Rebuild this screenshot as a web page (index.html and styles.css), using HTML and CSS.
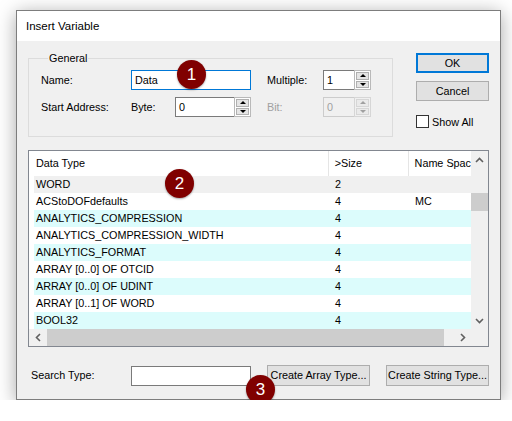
FILE: index.html
```html
<!DOCTYPE html>
<html lang="en">
<head>
    <meta charset="UTF-8">
    <title>Insert Variable</title>
    <link rel="stylesheet" href="styles.css">
</head>
<body>
    <div class="dialog">
        <div class="titlebar">Insert Variable</div>
        <div class="body">
            <div class="top">
                <fieldset class="group">
                    <legend>General</legend>
                    <div class="fields">
                        <span class="lbl">Name:</span>
                        <div class="edit focus name-edit">Data</div>
                        <span class="lbl col5">Multiple:</span>
                        <div class="spin">
                            <span class="spin-val">1</span>
                            <span class="spin-btns">
                                <span><i class="tri up"></i></span>
                                <span><i class="tri down"></i></span>
                            </span>
                        </div>
                        <span class="lbl">Start Address:</span>
                        <span class="lbl">Byte:</span>
                        <div class="spin">
                            <span class="spin-val">0</span>
                            <span class="spin-btns">
                                <span><i class="tri up"></i></span>
                                <span><i class="tri down"></i></span>
                            </span>
                        </div>
                        <span class="lbl col5 disabled">Bit:</span>
                        <div class="spin disabled">
                            <span class="spin-val">0</span>
                            <span class="spin-btns">
                                <span><i class="tri up"></i></span>
                                <span><i class="tri down"></i></span>
                            </span>
                        </div>
                    </div>
                </fieldset>
                <div class="side">
                    <div class="btn default">OK</div>
                    <div class="btn">Cancel</div>
                    <label class="check"><span class="box"></span>Show All</label>
                </div>
            </div>

            <div class="list">
                <div class="list-main">
                    <div class="hdr">
                        <span class="c1">Data Type</span>
                        <span class="c2">&gt;Size</span>
                        <span class="c3">Name Spac</span>
                    </div>
                    <div class="row sel"><span class="c1">WORD</span><span class="c2">2</span><span class="c3"></span></div>
                    <div class="row"><span class="c1">ACStoDOFdefaults</span><span class="c2">4</span><span class="c3">MC</span></div>
                    <div class="row alt"><span class="c1">ANALYTICS_COMPRESSION</span><span class="c2">4</span><span class="c3"></span></div>
                    <div class="row"><span class="c1">ANALYTICS_COMPRESSION_WIDTH</span><span class="c2">4</span><span class="c3"></span></div>
                    <div class="row alt"><span class="c1">ANALYTICS_FORMAT</span><span class="c2">4</span><span class="c3"></span></div>
                    <div class="row"><span class="c1">ARRAY [0..0] OF OTCID</span><span class="c2">4</span><span class="c3"></span></div>
                    <div class="row alt"><span class="c1">ARRAY [0..0] OF UDINT</span><span class="c2">4</span><span class="c3"></span></div>
                    <div class="row"><span class="c1">ARRAY [0..1] OF WORD</span><span class="c2">4</span><span class="c3"></span></div>
                    <div class="row alt"><span class="c1">BOOL32</span><span class="c2">4</span><span class="c3"></span></div>
                </div>
                <div class="vscroll">
                    <span class="arrow"><svg width="9" height="6" viewBox="0 0 9 6"><path d="M1 5 L4.5 1.5 L8 5" fill="none" stroke="#606060" stroke-width="1.6"/></svg></span>
                    <span class="vgap"></span>
                    <span class="vthumb"></span>
                    <span class="fill"></span>
                    <span class="arrow"><svg width="9" height="6" viewBox="0 0 9 6"><path d="M1 1 L4.5 4.5 L8 1" fill="none" stroke="#606060" stroke-width="1.6"/></svg></span>
                </div>
                <div class="hscroll">
                    <span class="arrow"><svg width="6" height="9" viewBox="0 0 6 9"><path d="M5 1 L1.5 4.5 L5 8" fill="none" stroke="#606060" stroke-width="1.6"/></svg></span>
                    <span class="hthumb"></span>
                    <span class="fill"></span>
                    <span class="arrow"><svg width="6" height="9" viewBox="0 0 6 9"><path d="M1 1 L4.5 4.5 L1 8" fill="none" stroke="#606060" stroke-width="1.6"/></svg></span>
                </div>
                <div class="corner"></div>
            </div>

            <div class="search">
                <span class="search-lbl">Search Type:</span>
                <div class="edit search-edit"></div>
                <div class="btn wide">Create Array Type...</div>
                <div class="btn wide">Create String Type...</div>
            </div>
        </div>

        <span class="badge b1">1</span>
        <span class="badge b2">2</span>
        <span class="badge b3">3</span>
    </div>
</body>
</html>
```

FILE: styles.css
```css
body { margin: 0; background: #fff; font-family: "Liberation Sans", Arial, sans-serif; font-size: 10.8px; color: #000; }
.dialog { position: relative; width: 483px; margin: 10px 0 0 16px; border: 1px solid #7d7d7d; background: #f0f0f0; box-shadow: 0 3px 18px rgba(0, 0, 0, 0.35); }
.titlebar { height: 30px; line-height: 30px; padding-left: 9px; background: #fff; font-size: 11.5px; }
.body { padding: 12px 11px 13px 11px; }

.top { display: flex; gap: 23px; }
.group { margin: 0; padding: 6px 21px 19px 12px; border: 1px solid #dcdcdc; width: 330px; }
.group legend { margin-left: 7px; padding: 0 1px; line-height: 11px; }
.fields { display: grid; grid-template-columns: 90px 44px 76px 16px 56px 48px; grid-template-rows: 20px 20px; row-gap: 7px; align-items: center; }
.col5 { grid-column: 5; }
.name-edit { grid-column: 2 / 4; }
.disabled { color: #a0a0a0; }

.edit { box-sizing: border-box; height: 20px; line-height: 18px; padding-left: 3px; border: 1px solid #7a7a7a; background: #fff; }
.edit.focus { border-color: #0078d7; }

.spin { display: flex; height: 20px; }
.spin-val { flex: 1; box-sizing: border-box; line-height: 18px; padding-left: 3px; border: 1px solid #7a7a7a; border-right: 0; background: #fff; }
.spin-btns { width: 17px; box-sizing: border-box; display: flex; flex-direction: column; gap: 1px; padding: 1px; border: 1px solid #b9b9b9; background: #fff; }
.spin-btns span { flex: 1; display: flex; align-items: center; justify-content: center; background: #e5e5e5; border: 1px solid #b0b0b0; }
.tri { width: 0; height: 0; border-left: 3px solid transparent; border-right: 3px solid transparent; }
.tri.up { border-bottom: 3px solid #000; }
.tri.down { border-top: 3px solid #000; }
.spin.disabled .spin-val { border-color: #cccccc; background: #f0f0f0; }
.spin.disabled .spin-btns { border-color: #d6d6d6; background: #f0f0f0; }
.spin.disabled .spin-btns span { background: #eaeaea; border-color: #d6d6d6; }
.spin.disabled .tri.up { border-bottom-color: #a0a0a0; }
.spin.disabled .tri.down { border-top-color: #a0a0a0; }

.side { width: 73px; display: flex; flex-direction: column; }
.btn { box-sizing: border-box; height: 20px; line-height: 18px; text-align: center; background: #e1e1e1; border: 1px solid #adadad; }
.btn.default { border: 2px solid #0078d7; line-height: 16px; }
.side .btn + .btn { margin-top: 8px; }
.check { display: flex; align-items: center; gap: 3px; margin-top: 14px; }
.box { width: 11px; height: 11px; border: 1px solid #333; background: #fff; }

.list { display: grid; grid-template-columns: 1fr 17px; margin-top: 13px; border: 1px solid #828790; background: #fff; }
.list-main { overflow: hidden; white-space: nowrap; }
.hdr { display: flex; height: 25px; line-height: 25px; }
.hdr span { box-sizing: border-box; border-right: 1px solid #e5e5e5; }
.hdr .c1 { width: 300px; padding-left: 7px; }
.hdr .c2 { width: 80px; padding-left: 6px; }
.hdr .c3 { flex: 1; padding-left: 6px; border-right: 0; }
.row { display: flex; height: 17px; line-height: 17px; margin-left: 5px; }
.row .c1 { width: 295px; padding-left: 2px; box-sizing: border-box; }
.row .c2 { width: 80px; padding-left: 6px; box-sizing: border-box; }
.row .c3 { flex: 1; padding-left: 6px; }
.row.sel { background: #f0f0f0; }
.row.alt { background: #dcfcfc; }

.vscroll { display: flex; flex-direction: column; background: #f0f0f0; }
.vscroll .arrow { height: 17px; display: flex; align-items: center; justify-content: center; }
.vgap { height: 25px; }
.vthumb { height: 18px; background: #cdcdcd; }
.fill { flex: 1; }
.hscroll { display: flex; height: 17px; background: #f0f0f0; }
.hscroll .arrow { width: 17px; display: flex; align-items: center; justify-content: center; }
.hthumb { width: 397px; margin-left: 1px; background: #cdcdcd; }
.corner { background: #f0f0f0; }

.search { display: flex; align-items: center; margin-top: 17px; padding-left: 3px; }
.search-lbl { width: 100px; }
.search-edit { width: 120px; margin-top: 2px; }
.btn.wide { width: 103px; height: 21px; line-height: 19px; margin-left: 16px; }

.badge { position: absolute; width: 29px; height: 29px; border-radius: 50%; background: #800000; color: #fff; font-size: 17px; display: flex; align-items: center; justify-content: center; box-shadow: 0 1px 2px rgba(0, 0, 0, 0.35); }
.b1 { left: 160px; top: 49px; }
.b2 { left: 148px; top: 158px; }
.b3 { left: 229px; top: 364px; }
```
